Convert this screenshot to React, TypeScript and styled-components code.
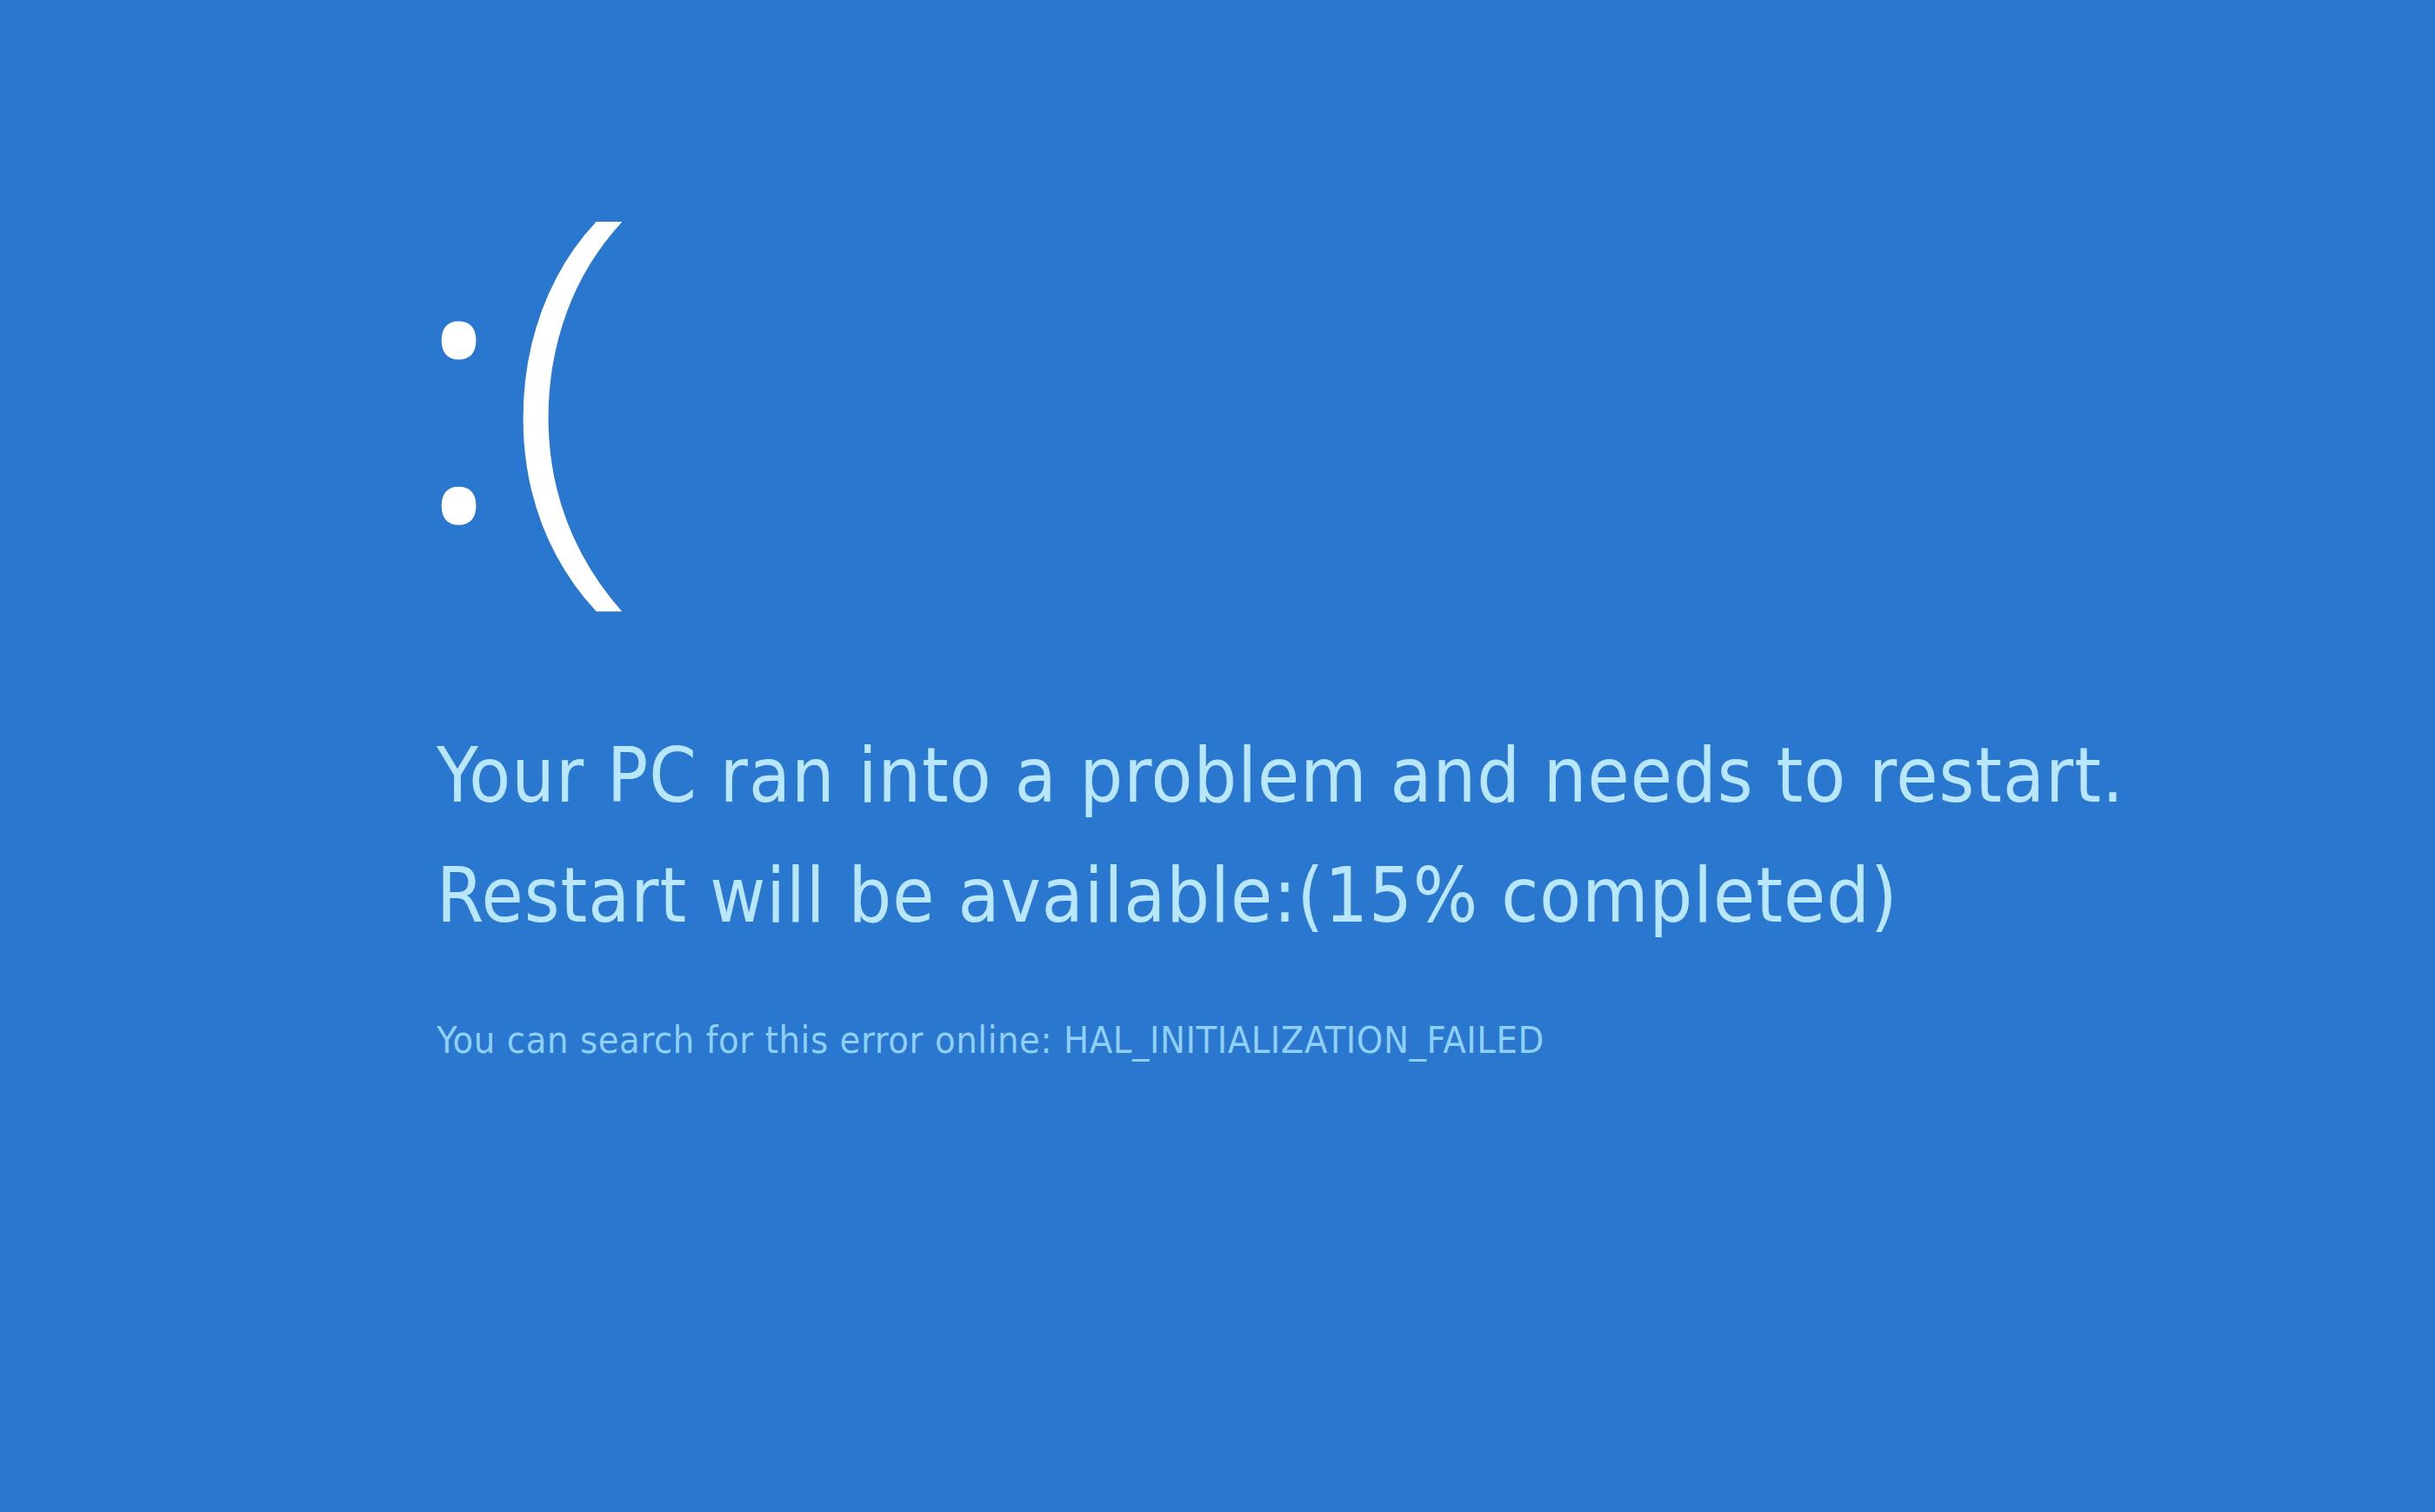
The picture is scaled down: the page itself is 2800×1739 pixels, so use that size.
import React from "react";
import styled, { createGlobalStyle } from "styled-components";

const Global = createGlobalStyle`
  html, body { margin: 0; padding: 0; background: #2a77cf; }
  body { overflow: hidden; }
`;

const Screen = styled.main`
  width: 2800px;
  height: 1739px;
  background: #2a77cf;
  box-sizing: border-box;
  padding: 146px 0 0 502px;
  display: flex;
  flex-direction: column;
`;

const Face = styled.div`
  display: flex;
  align-items: baseline;
  color: #ffffff;
  font-family: "Open Sans", sans-serif;
`;

const Eyes = styled.span`
  display: block;
  font-size: 414px;
  line-height: 1;
  font-weight: 300;
  -webkit-text-stroke: 7px #ffffff;
  margin-left: -24px;
  transform: translateY(-6px);
`;

const Mouth = styled.span`
  display: block;
  font-size: 514px;
  line-height: 1;
  font-weight: 300;
  margin-left: 1px;
  transform: translateY(20px) scaleX(1.12);
  transform-origin: left center;
`;

const Message = styled.div`
  margin-top: 163px;
  display: flex;
  flex-direction: column;
  color: #b8e6fb;
  font-family: "DejaVu Sans", sans-serif;
  font-stretch: condensed;
  font-size: 87px;
  letter-spacing: 1.05px;
  line-height: 138px;
`;

const Line = styled.div`
  white-space: nowrap;
`;

const Hint = styled.div`
  margin-top: 72px;
  color: #8ed0f6;
  font-family: "DejaVu Sans", sans-serif;
  font-stretch: condensed;
  font-size: 43px;
  letter-spacing: 0.6px;
  line-height: 1.2;
  white-space: nowrap;
`;

export default function App() {
  return (
    <>
      <Global />
      <Screen>
        <Face>
          <Eyes>:</Eyes>
          <Mouth>(</Mouth>
        </Face>
        <Message>
          <Line>Your PC ran into a problem and needs to restart.</Line>
          <Line>Restart will be available:(15% completed)</Line>
        </Message>
        <Hint>You can search for this error online: HAL_INITIALIZATION_FAILED</Hint>
      </Screen>
    </>
  );
}
